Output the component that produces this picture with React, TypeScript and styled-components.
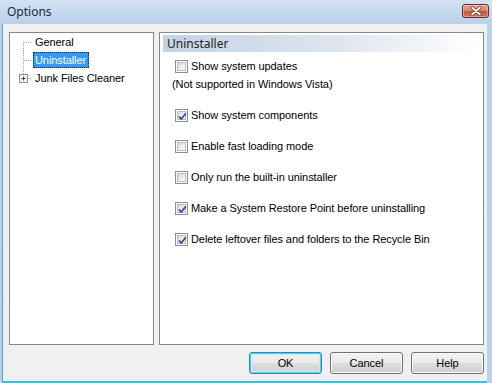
import React from 'react';
import styled, { createGlobalStyle } from 'styled-components';

const Global = createGlobalStyle`
  html, body { margin: 0; padding: 0; }
  body {
    width: 492px; height: 383px; overflow: hidden;
    background: #b9d1ea;
    font-family: Tahoma, "Liberation Sans", Arial, sans-serif;
    font-size: 11px;
    letter-spacing: -0.08px;
    color: #000;
  }
`;

const Window = styled.div`
  width: 492px; height: 383px; box-sizing: border-box;
  display: flex; flex-direction: column;
  background: linear-gradient(to bottom, #d3e2f3 0px, #bad2ea 22px, #b9d1ea 100%);
  padding: 0 5px 0 2px;
`;

const TitleBar = styled.div`
  height: 24px; display: flex; align-items: center; justify-content: space-between;
  padding-left: 5px;
`;

const Title = styled.span`
  font-family: "Noto Sans", "Liberation Sans", sans-serif;
  font-size: 12px; color: #1a2a3a; margin-top: -1px; letter-spacing: 0;
`;

const CloseButton = styled.div`
  width: 27px; height: 14px; box-sizing: border-box;
  margin-right: -2px; margin-top: -3px;
  border: 1px solid #6a2b27; border-radius: 3px;
  background: linear-gradient(to bottom, #e8a697 0%, #d9836f 45%, #c7553f 55%, #d6775c 100%);
  box-shadow: inset 0 0 0 1px rgba(255,255,255,0.35);
  display: flex; align-items: center; justify-content: center;
`;

const Client = styled.div`
  flex: 1; display: flex; flex-direction: column;
  background: #f0f0f0;
  border-left: 1px solid #52a9e2;
  border-bottom: 2px solid #2fc6ec;
  padding: 8px 3px 7px 6px;
`;

const Panels = styled.div`
  height: 313px; display: flex; gap: 5px;
`;

const TreePanel = styled.div`
  width: 145px; box-sizing: border-box;
  background: #fff; border: 1px solid #828790;
  display: flex; flex-direction: column;
`;

const TreeItem = styled.div`
  height: 18px; display: flex; align-items: center;
`;

const Gutter = styled.svg`
  width: 23px; height: 18px; flex: none; display: block;
`;

const Label = styled.span<{ $selected?: boolean }>`
  height: 16px; box-sizing: border-box;
  padding: 0 2px 0 1px;
  border: 1px dotted ${p => (p.$selected ? '#1a1a1a' : 'transparent')};
  background: ${p => (p.$selected ? '#3399ff' : 'transparent')};
  color: ${p => (p.$selected ? '#fff' : '#000')};
  line-height: 14px;
`;

const ContentPanel = styled.div`
  flex: 1; box-sizing: border-box;
  background: #fff; border: 1px solid #828790;
  padding: 2px 3px;
  display: flex; flex-direction: column;
`;

const Header = styled.div`
  height: 17px; line-height: 17px; padding-left: 4px;
  background: linear-gradient(to right, #c4d3e3 0%, #dde6ef 55%, #ffffff 100%);
  font-family: "Noto Sans", "Liberation Sans", sans-serif;
  font-size: 12px; color: #1e1e1e; letter-spacing: 0;
`;

const Options = styled.div`
  display: flex; flex-direction: column; gap: 18px;
  padding: 8px 0 0 9px;
`;

const Group = styled.div`
  display: flex; flex-direction: column; gap: 5px;
`;

const Row = styled.label`
  display: flex; align-items: center; gap: 3px; height: 13px;
  padding-left: 3px;
`;

const Note = styled.div`
  height: 13px; line-height: 13px;
`;

const Box = styled.span`
  width: 13px; height: 13px; box-sizing: border-box; flex: none;
  border: 1px solid #8e8f8f;
  background: #fff;
  padding: 1px;
  display: block;
`;

const BoxInner = styled.span`
  display: block; width: 100%; height: 100%;
  background: linear-gradient(135deg, #d6d6d6 0%, #ececec 50%, #fcfcfc 100%);
  border: 1px solid #bcbcbc; box-sizing: border-box;
  position: relative;
`;

const Text = styled.span`
  line-height: 13px;
`;

const Buttons = styled.div`
  margin-top: 7px; height: 22px;
  display: flex; justify-content: flex-end; gap: 8px;
`;

const Button = styled.div<{ $default?: boolean }>`
  width: 73px; height: 22px; box-sizing: border-box;
  border: 1px solid ${p => (p.$default ? '#3c7fb1' : '#707070')};
  border-radius: 3px;
  background: linear-gradient(to bottom, #f2f2f2 0%, #ebebeb 48%, #dddddd 52%, #cfcfcf 100%);
  box-shadow: ${p => (p.$default ? 'inset 0 0 0 1px #48d8fb, inset 0 0 0 2px #c8ecfa' : 'inset 0 0 0 1px #fcfcfc')};
  display: flex; align-items: center; justify-content: center;
  color: #000;
`;

const Check = () => (
  <svg width="9" height="9" viewBox="0 0 9 9" style={{ position: 'absolute', left: 0, top: 0 }}>
    <path d="M1 4.5 L3.2 7 L8 1.2" fill="none" stroke="#2c4a9a" strokeWidth="1.8" strokeLinejoin="round" />
  </svg>
);

const CheckBox = ({ checked, label }: { checked?: boolean; label: string }) => (
  <Row>
    <Box>
      <BoxInner>{checked && <Check />}</BoxInner>
    </Box>
    <Text>{label}</Text>
  </Row>
);

const dot = { stroke: '#a0a0a0', strokeWidth: 1, strokeDasharray: '1 1' };

export default function App() {
  return (
    <>
      <Global />
      <Window>
        <TitleBar>
          <Title>Options</Title>
          <CloseButton>
            <svg width="12" height="10" viewBox="0 0 12 10">
              <path d="M2 1.5 L10 8.5 M10 1.5 L2 8.5" stroke="#5a2a22" strokeWidth="3.2" strokeLinecap="round" />
              <path d="M2 1.5 L10 8.5 M10 1.5 L2 8.5" stroke="#ffffff" strokeWidth="1.8" strokeLinecap="round" />
            </svg>
          </CloseButton>
        </TitleBar>
        <Client>
          <Panels>
            <TreePanel>
              <TreeItem>
                <Gutter viewBox="0 0 23 18">
                  <line x1="13.5" y1="9" x2="13.5" y2="18" {...dot} />
                  <line x1="14" y1="9.5" x2="22" y2="9.5" {...dot} />
                </Gutter>
                <Label>General</Label>
              </TreeItem>
              <TreeItem>
                <Gutter viewBox="0 0 23 18">
                  <line x1="13.5" y1="0" x2="13.5" y2="18" {...dot} />
                  <line x1="14" y1="9.5" x2="22" y2="9.5" {...dot} />
                </Gutter>
                <Label $selected>Uninstaller</Label>
              </TreeItem>
              <TreeItem>
                <Gutter viewBox="0 0 23 18">
                  <line x1="13.5" y1="0" x2="13.5" y2="5" {...dot} />
                  <line x1="18" y1="9.5" x2="22" y2="9.5" {...dot} />
                  <rect x="9.5" y="5.5" width="8" height="8" fill="#f4f4f4" stroke="#919191" />
                  <path d="M11.5 9.5 H15.5 M13.5 7.5 V11.5" stroke="#2b4f8a" strokeWidth="1" />
                </Gutter>
                <Label>Junk Files Cleaner</Label>
              </TreeItem>
            </TreePanel>
            <ContentPanel>
              <Header>Uninstaller</Header>
              <Options>
                <Group>
                  <CheckBox label="Show system updates" />
                  <Note>(Not supported in Windows Vista)</Note>
                </Group>
                <CheckBox checked label="Show system components" />
                <CheckBox label="Enable fast loading mode" />
                <CheckBox label="Only run the built-in uninstaller" />
                <CheckBox checked label="Make a System Restore Point before uninstalling" />
                <CheckBox checked label="Delete leftover files and folders to the Recycle Bin" />
              </Options>
            </ContentPanel>
          </Panels>
          <Buttons>
            <Button $default>OK</Button>
            <Button>Cancel</Button>
            <Button>Help</Button>
          </Buttons>
        </Client>
      </Window>
    </>
  );
}
